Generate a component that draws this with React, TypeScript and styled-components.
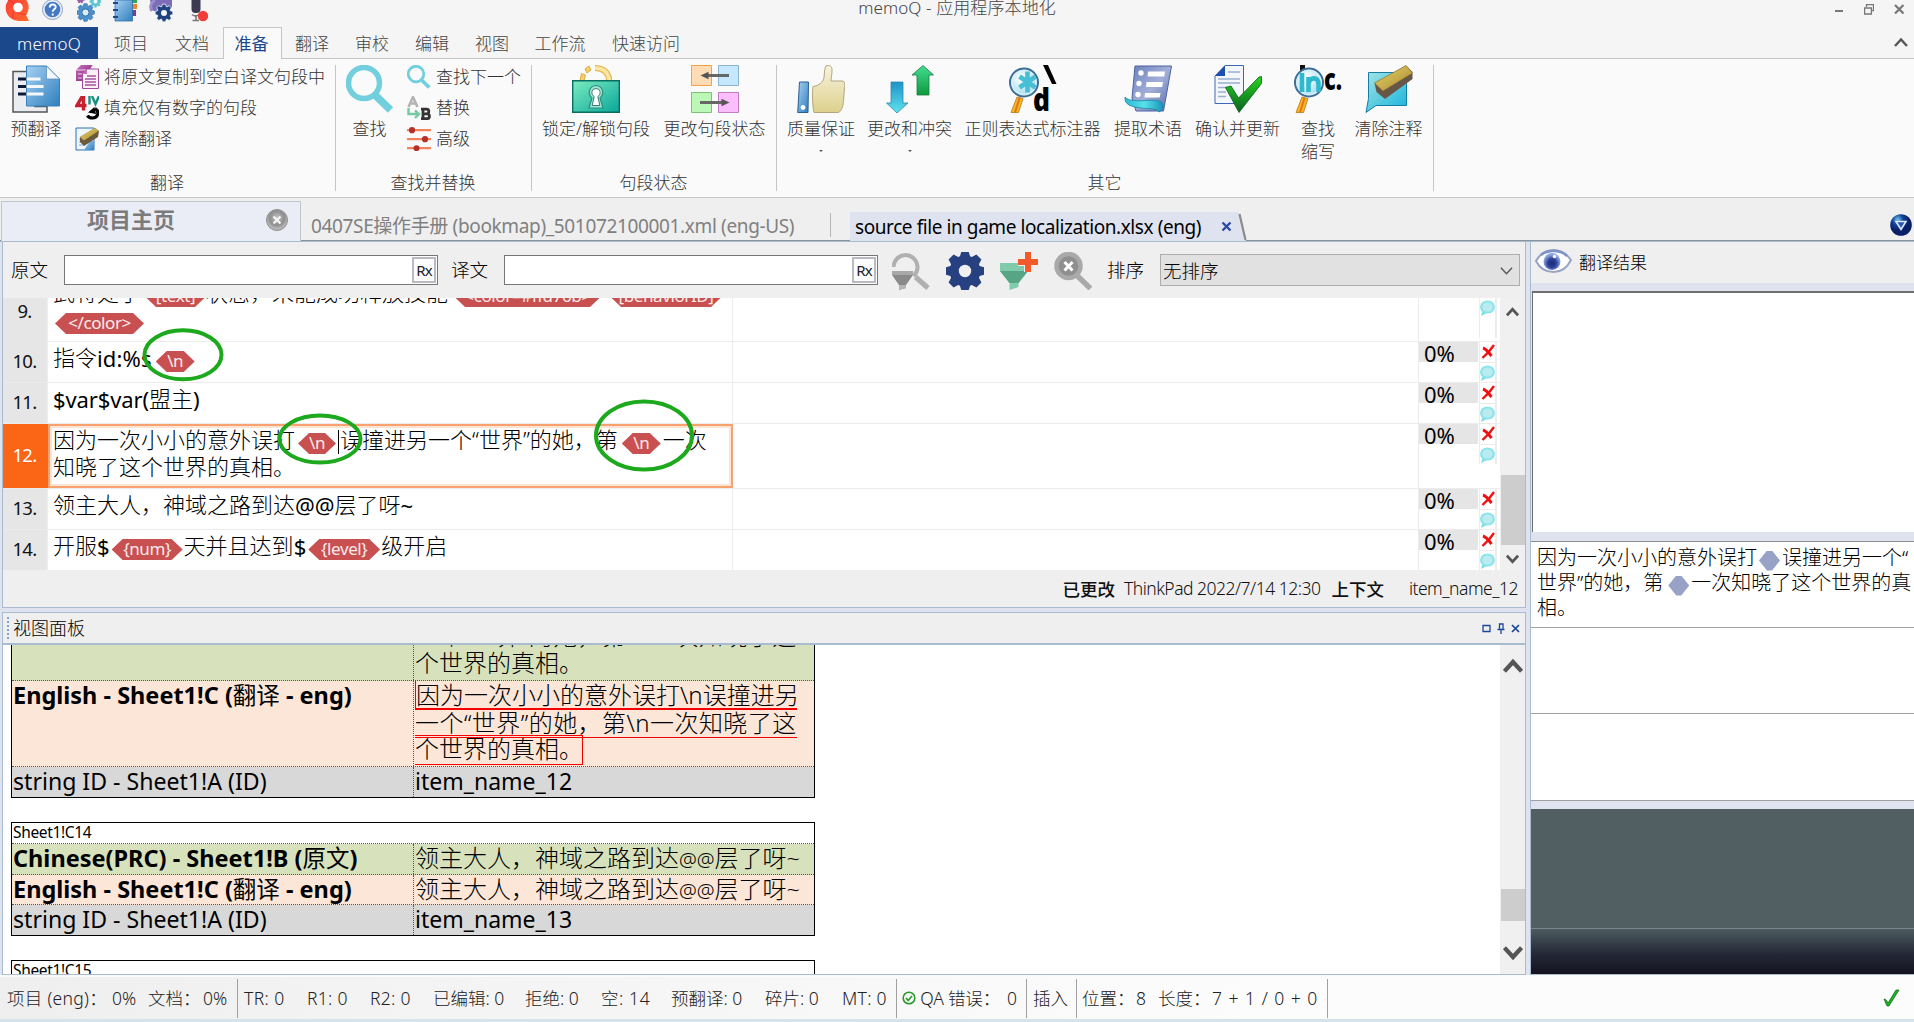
import React from "react";
import styled, { createGlobalStyle } from "styled-components";

const ui = `"Noto Sans", "Noto Sans CJK SC", sans-serif`;
const lav = "#dfe3f0";
const edge = "#a9bccf";

const Global = createGlobalStyle`
  * { box-sizing: border-box; }
  body { margin: 0; overflow: hidden; background: #efefef; font-family: ${ui}; color: #000; }
  svg { display: block; flex: none; }
`;

const Window = styled.div`
  width: 1914px; height: 1022px; display: flex; flex-direction: column; overflow: hidden;
`;
const Txt = styled.span<{ size?: number; ls?: number; w?: number; color?: string }>`
  white-space: pre;
  font-size: ${(p) => p.size ?? 17}px;
  letter-spacing: ${(p) => p.ls ?? 0}px;
  font-weight: ${(p) => p.w ?? 300};
  color: ${(p) => p.color ?? "inherit"};
`;

/* ---------- title bar ---------- */
const TitleBar = styled.header`
  height: 27px; flex: none; background: #f5f5f5; display: grid; grid-template-columns: 1fr auto 1fr; align-items: start;
`;
const Quick = styled.div`display: flex; gap: 12px; padding-left: 5px;`;
const WinTitle = styled.div`font-size: 17px; font-weight: 300; line-height: 16px; color: #444; white-space: pre; letter-spacing: 0.1px;`;
const WinButtons = styled.div`display: flex; justify-content: flex-end; gap: 20px; padding: 4px 9px 0 0;`;

/* ---------- ribbon tabs ---------- */
const TabStrip = styled.nav`
  height: 32px; flex: none; display: flex; background: #f5f5f5; box-shadow: inset 0 -1px #c6c6c6;
  font-size: 17px; font-weight: 300; line-height: 33px; color: #444; text-align: center;
`;
const RibbonTab = styled.div<{ w: number; active?: boolean }>`
  width: ${(p) => p.w}px;
  ${(p) => p.active && "background:#fafafa;color:#1b478b;border:1px solid #c6c6c6;border-bottom:0;line-height:32px;font-weight:400;padding-right:2px;"}
`;
const FileTab = styled.div`width: 98px; margin-right: 3px; background: #1b478b; color: #fff; font-weight: 300; letter-spacing: 0.2px;`;
const Collapse = styled.div`margin-left: auto; padding: 9px 6px 0 0;`;

/* ---------- ribbon ---------- */
const Ribbon = styled.section`
  height: 139px; flex: none; display: flex; background: #fafafa; border-bottom: 1px solid #c6c6c6; padding-top: 6px;
  color: #333; font-size: 17px; font-weight: 300;
`;
const Group = styled.div<{ w: number }>`
  width: ${(p) => p.w}px; height: 126px; border-right: 1px solid #c6c6c6; display: flex; flex-direction: column;
`;
const GroupBody = styled.div`flex: 1; display: flex;`;
const GroupLabel = styled.div`text-align: center; line-height: 18px; height: 17px; padding-right: 1px;`;
const Large = styled.div<{ w: number }>`
  width: ${(p) => p.w}px; display: flex; flex-direction: column; align-items: center; text-align: center;
  line-height: 23px; white-space: pre;
`;
const LargeLabel = styled.div`margin-top: 4px;`;
const Caret = styled.i`
  margin-top: 10px; border: 2.5px solid transparent; border-top-color: #555; border-bottom: 0;
`;
const Smalls = styled.div<{ ml: number }>`margin-left: ${(p) => p.ml}px; display: flex; flex-direction: column; gap: 7px;`;
const Small = styled.div`display: flex; gap: 5px; align-items: center; height: 24px; white-space: pre; line-height: 26px;`;

/* ---------- document tabs ---------- */
const DocTabs = styled.nav`
  height: 44px; flex: none; display: flex; align-items: flex-end; background: #efefef;
  box-shadow: inset 0 -1px ${edge}, inset 0 -2px #8b9299;
`;
const HomeTab = styled.div`
  width: 300px; height: 40px; margin: 0 0 1px 1px; background: #ebedf6; border: 1px solid #c2c5cb; border-bottom: 0;
  display: flex; align-items: center; padding: 0 12px 3px 85px; justify-content: space-between;
`;
const HomeName = styled.span`font-size: 22px; font-weight: 700; color: #7b7b7b; line-height: 26px; margin-top: -3px;`;
const DocTab = styled.div`width: 529px; padding-left: 10px; height: 29px; line-height: 27px;`;
const TabSep = styled.div`width: 1px; height: 24px; background: #b5b5b5; margin: 0 19px 5px 0;`;
const ActiveDoc = styled.div`
  height: 29px; width: 388px; display: flex; align-items: center; background: ${lav}; padding: 0 6px 0 5px;
  justify-content: space-between; margin-bottom: 1px;
`;
const DocMenu = styled.div`margin: 0 2px 6px auto;`;

/* ---------- workspace ---------- */
const Work = styled.main`flex: none; height: 735px; display: flex; background: ${lav}; border-bottom: 2px solid #fafbfc;`;
const Left = styled.div`width: 1526px; padding-left: 2px; display: flex; flex-direction: column; gap: 4px;`;
const Editor = styled.section`
  height: 366px; background: #efefef; border: solid ${edge}; border-width: 0 1px 1px 1px; display: flex; flex-direction: column;
`;
const Filter = styled.div`height: 56px; display: flex; align-items: center; padding-left: 8px; font-size: 18.5px; font-weight: 300;`;
const FLabel = styled.label<{ w: number }>`width: ${(p) => p.w}px; white-space: pre; line-height: 28px;`;
const Field = styled.div<{ mr: number }>`
  width: 374px; height: 30px; border: 1px solid #767676; background: #fff; display: flex; justify-content: flex-end;
  padding: 1px; margin-right: ${(p) => p.mr}px;
`;
const Rx = styled.button`
  width: 24px; height: 26px; padding: 0; border: 2px solid #b9bac4; background: #fcfcfd; font: 400 15px/22px ${ui};
  letter-spacing: -0.8px; color: #222;
`;
const Tools = styled.div`display: flex; gap: 16px; margin-right: 15px; padding-top: 1px;`;
const Select = styled.div`
  width: 360px; height: 32px; border: 1px solid #adadad; background: #e1e1e1; display: flex; align-items: center;
  justify-content: space-between; padding: 0 6px 0 2px;
`;

const GridArea = styled.div`height: 272px; display: flex; overflow: hidden; position: relative;`;
const Rows = styled.div`width: 1497px; background: #fff;`;
const Row = styled.div<{ h: number }>`
  height: ${(p) => p.h}px; display: grid; grid-template-columns: 45px 685px 686px 60px 21px; border-bottom: 1px solid #ececec;
`;
const Num = styled.div<{ active?: boolean; up?: boolean }>`
  background: ${(p) => (p.active ? "#fb6516" : "#e6e6e6")}; color: ${(p) => (p.active ? "#fff" : "#111")};
  border-right: 1px solid ${(p) => (p.active ? "#fb6516" : "#eee")};
  display: flex; align-items: center; justify-content: center;
  padding: 0 1px ${(p) => (p.up ? 24 : 3)}px 0; font-size: 18.5px; font-weight: 400; letter-spacing: -0.7px;
`;
const Source = styled.div<{ active?: boolean; pull?: number }>`
  overflow: hidden; padding: 2px 0 0 5px; border-right: 1px solid #ececec; font-size: 22px; font-weight: 300;
  ${(p) => p.active && "border:2px solid #f9a16f;box-shadow:inset 0 0 0 2px #fde3d3;padding:0 0 0 3px;"}
  & > :first-child { margin-top: ${(p) => p.pull ?? 0}px; }
`;
const Line = styled.div`display: flex; height: 27px; align-items: center; white-space: pre; line-height: 27px;`;
const Pill = styled.span<{ w: number; l?: number; r?: number }>`
  width: ${(p) => p.w}px; height: 21px; margin: 8px ${(p) => p.r ?? 0}px 0 ${(p) => p.l ?? 0}px; flex: none;
  background: #c85050; color: #fbeaea; font-size: 17px; font-weight: 400; line-height: 20px; text-align: center; letter-spacing: -0.4px;
  clip-path: polygon(0 50%, 11px 0, calc(100% - 11px) 0, 100% 50%, calc(100% - 11px) 100%, 11px 100%);
`;
const CaretBar = styled.i`width: 1px; height: 24px; background: #000; margin: 4px 1px 0 2px;`;
const Latin = styled.span<{ ls?: number }>`font-weight: 400; letter-spacing: ${(p) => p.ls ?? 0}px; padding-top: 2px;`;
const Target = styled.div`border-right: 1px solid #ececec;`;
const Match = styled.div<{ empty?: boolean }>`
  height: 20px; overflow: hidden; background: ${(p) => (p.empty ? "#fff" : "#e5e5e5")}; padding-left: 5px; line-height: 23px;
  font-size: 22px; font-weight: 400; width: 59px;
`;
const Marks = styled.div`
  width: 18px; display: flex; flex-direction: column; align-items: center; border: solid #ececec; border-width: 0 2px 0 1px;
  height: 40px;
`;
const MarkX = styled.div`width: 100%; height: 21px; border-bottom: 1px solid #ececec; display: flex; justify-content: center; padding-top: 2px;`;
const MarkBubble = styled.div`padding-top: 2px;`;
const Annotations = styled.svg`position: absolute; left: 0; top: 0; pointer-events: none;`;

const Scroll = styled.div<{ w: number }>`
  width: ${(p) => p.w}px; background: #f0f0f0; display: flex; flex-direction: column; align-items: center; flex: none;
`;
const Thumb = styled.i<{ mt: number; h: number }>`width: 24px; height: ${(p) => p.h}px; margin-top: ${(p) => p.mt}px; background: #cdcdcd;`;
const ArrowBox = styled.div<{ mt: number }>`margin-top: ${(p) => p.mt}px; height: 16px;`;
const Info = styled.div`
  flex: 1; display: flex; align-items: center; justify-content: flex-end; padding: 0 7px 1px 0; color: #111;
`;
const InfoItem = styled.span<{ mr?: number; bold?: boolean; ls?: number }>`
  font-size: 17.5px; white-space: pre; margin-right: ${(p) => p.mr ?? 0}px; font-weight: ${(p) => (p.bold ? 500 : 300)};
  letter-spacing: ${(p) => p.ls ?? 0}px;
`;

/* ---------- view pane ---------- */
const View = styled.section`height: 363px; border: 1px solid ${edge}; background: #fff; display: flex; flex-direction: column;`;
const ViewHead = styled.div`
  height: 32px; flex: none; background: #efefef; border-bottom: 2px solid ${edge}; display: flex; align-items: center; padding: 0 5px 0 4px;
`;
const Grip = styled.i`width: 2px; height: 22px; margin-right: 4px; background: repeating-linear-gradient(#7fa3d4 0 2px, transparent 2px 4px);`;
const PaneName = styled.span`font-size: 18px; font-weight: 300; margin-top: -3px;`;
const PaneButtons = styled.div`margin-left: auto; display: flex; gap: 6px; align-items: center;`;
const ViewBody = styled.div`flex: 1; min-height: 0; display: flex; justify-content: space-between;`;
const Sheets = styled.div`width: 804px; margin-left: 8px; overflow: hidden; display: flex; flex-direction: column; gap: 24px;`;
const Sheet = styled.div<{ cut?: boolean }>`border: 1px solid #000; flex: none; ${(p) => p.cut && "border-top:0;"}`;
const SheetTitle = styled.div`height: 21px; line-height: 19px; border-bottom: 1px dotted #555; padding-left: 1px; font-size: 15.5px; letter-spacing: -0.35px;`;
const tones = { green: "#d7e2bc", peach: "#fce6d7", grey: "#d8d8d8" };
const SheetRow = styled.div<{ tone: keyof typeof tones; h: number }>`
  height: ${(p) => p.h}px; display: grid; grid-template-columns: 401px 1fr; background: ${(p) => tones[p.tone]};
  border-bottom: ${(p) => (p.tone === "grey" ? 0 : 1)}px dotted #555; overflow: hidden; line-height: 28px;
`;
const Name = styled.div<{ bold?: boolean }>`
  padding-left: 1px; white-space: pre; font-size: ${(p) => (p.bold ? 23.5 : 23.1)}px; font-weight: ${(p) => (p.bold ? 700 : 400)};
`;
const Thin = styled.span`font-weight: 400; font-size: 23.5px;`;
const At = styled.span`font-size: 20px;`;
const Value = styled.div<{ pull?: number; latin?: boolean }>`
  border-left: 1px dotted #555; padding-left: 1px; white-space: pre; font-size: 24px; font-weight: 300;
  ${(p) => p.latin && "font-size:23px;font-weight:400;"}
  & > :first-child { margin-top: ${(p) => p.pull ?? 0}px; }
`;
const VLine = styled.div<{ ls?: number }>`height: 27px; line-height: 27px; letter-spacing: ${(p) => p.ls ?? 0}px;`;
const Hit = styled.div<{ w: number; kind: "open" | "mid" | "close" }>`
  width: ${(p) => p.w}px; border: 0 solid #f50000;
  ${(p) => p.kind === "open" && "height:29px;line-height:27px;border-width:0 0 2px 1px;"}
  ${(p) => p.kind === "mid" && "height:28px;line-height:25px;border-width:0 0 1px 0;letter-spacing:0.45px;"}
  ${(p) => p.kind === "close" && "height:30px;line-height:26px;border-width:1px 1px 1px 0;margin-top:-3px;"}
`;

/* ---------- results pane ---------- */
const Results = styled.aside`margin-left: 4px; flex: 1; display: flex; flex-direction: column; border-left: 1px solid ${edge};`;
const ResHead = styled.div`
  height: 41px; background: #efefef; display: flex; align-items: center; gap: 7px; padding: 0 0 3px 4px; font-size: 17px; font-weight: 300;
`;
const ResList = styled.div`height: 241px; margin: 8px 0 0 1px; background: #fff; border: solid #6e6e6e; border-width: 2px 0 0 1px;`;
const Segment = styled.div<{ h: number; mt?: number }>`
  height: ${(p) => p.h}px; margin-top: ${(p) => p.mt ?? 0}px; background: #fff; border-bottom: 1px solid #a0a0a0;
  border-top: ${(p) => (p.mt ? 1 : 0)}px solid #8c8c8c; padding: 3px 0 0 6px; font-size: 20px; font-weight: 300; overflow: hidden;
`;
const SLine = styled.div`display: flex; height: 25px; align-items: center; white-space: pre; line-height: 25px;`;
const Hex = styled.i<{ l?: number }>`
  width: 21px; height: 20px; margin: 6px 2px 0 ${(p) => p.l ?? 2}px; background: #98a1c6; flex: none;
  clip-path: polygon(0 50%, 8px 0, 13px 0, 100% 50%, 13px 100%, 8px 100%);
`;
const Dark = styled.div`margin-top: 8px; height: 120px; background: #515f63; border-bottom: 1px solid #7b8589;`;
const DarkFade = styled.div`flex: 1; background: linear-gradient(#4c5b5f, #242937 55%, #141220); border-bottom: 1px solid ${edge};`;

/* ---------- status bar ---------- */
const Status = styled.footer`
  height: 45px; flex: none; display: flex; align-items: center; background: linear-gradient(90deg, #efefef, #fcfcfc 65%);
  border-bottom: 3px solid #d5e4ea; font-size: 17.5px; font-weight: 300; color: #222; padding-left: 7px;
`;
const Stat = styled.span<{ w: number; ls?: number }>`
  width: ${(p) => p.w}px; white-space: pre; letter-spacing: ${(p) => p.ls ?? 0}px; flex: none; padding-bottom: 1px;
`;
const StatSep = styled.i<{ mr: number }>`width: 1px; height: 39px; background: #a0a0a0; margin-right: ${(p) => p.mr}px;`;
const StatOk = styled.div`margin: 0 14px 0 auto;`;

/* ---------- icons ---------- */
function gear(cx: number, cy: number, ro: number, ri: number, n: number) {
  let d = "";
  for (let i = 0; i < n; i++) {
    const a = (i * 2 * Math.PI) / n - Math.PI / 2;
    const s = Math.PI / n;
    [[-0.85, ri], [-0.45, ro], [0.45, ro], [0.85, ri]].forEach(([k, r]) => {
      d += `${d ? "L" : "M"}${(cx + r * Math.cos(a + k * s)).toFixed(2)} ${(cy + r * Math.sin(a + k * s)).toFixed(2)}`;
    });
  }
  return d + "Z";
}
const Ico = ({ s = 24, h, vb, children }: { s?: number; h?: number; vb?: string; children: React.ReactNode }) => (
  <svg width={s} height={h ?? s} viewBox={vb ?? `0 0 ${s} ${h ?? s}`} fill="none">{children}</svg>
);
const DefsSvg = styled.svg`position: absolute;`;
const Defs = () => (
  <DefsSvg width="0" height="0">
    <defs>
      <linearGradient id="blue" x1="0" y1="0" x2="1" y2="1"><stop stopColor="#a5d0f3" /><stop offset="1" stopColor="#2f7fbd" /></linearGradient>
      <linearGradient id="teal" x1="0" y1="0" x2="1" y2="1"><stop stopColor="#7cecc0" /><stop offset="1" stopColor="#0aa69a" /></linearGradient>
      <linearGradient id="skin" x1="0" y1="0" x2="0" y2="1"><stop stopColor="#f7f3de" /><stop offset="1" stopColor="#ddd08c" /></linearGradient>
      <linearGradient id="down" x1="0" y1="0" x2="0" y2="1"><stop stopColor="#1d93c9" /><stop offset="1" stopColor="#5fe3ef" /></linearGradient>
      <linearGradient id="up" x1="0" y1="0" x2="0" y2="1"><stop stopColor="#42dd92" /><stop offset="1" stopColor="#0e9a3c" /></linearGradient>
      <linearGradient id="scroll" x1="0" y1="0" x2="1" y2="1"><stop stopColor="#6c82bd" /><stop offset=".5" stopColor="#a3afd8" /><stop offset="1" stopColor="#5468a8" /></linearGradient>
      <linearGradient id="curl" x1="0" y1="0" x2="1" y2="0"><stop stopColor="#2bb9d3" /><stop offset=".5" stopColor="#58e2ea" /><stop offset="1" stopColor="#1b93b8" /></linearGradient>
      <linearGradient id="tick" x1="0" y1="0" x2="0" y2="1"><stop stopColor="#25d51c" /><stop offset="1" stopColor="#0b5f23" /></linearGradient>
      <linearGradient id="note" x1="0" y1="0" x2="1" y2="1"><stop stopColor="#a3e4e6" /><stop offset="1" stopColor="#14b3dc" /></linearGradient>
      <linearGradient id="gold" x1="0" y1="0" x2="1" y2="1"><stop stopColor="#e8d56f" /><stop offset="1" stopColor="#a8872b" /></linearGradient>
      <linearGradient id="purple" x1="0" y1="0" x2="1" y2="1"><stop stopColor="#c96bb9" /><stop offset="1" stopColor="#7c2175" /></linearGradient>
      <linearGradient id="fire" x1="0" y1="0" x2="1" y2="1"><stop stopColor="#ff3b3b" /><stop offset="1" stopColor="#ff6a2a" /></linearGradient>
      <radialGradient id="lens" cx=".4" cy=".35"><stop stopColor="#fff" /><stop offset="1" stopColor="#b9e4f4" /></radialGradient>
      <radialGradient id="iris" cx=".5" cy=".6"><stop stopColor="#1d2a78" /><stop offset=".5" stopColor="#2b3f96" /><stop offset="1" stopColor="#8fa6e4" /></radialGradient>
      <radialGradient id="orb" cx=".35" cy=".25"><stop stopColor="#6fc6ee" /><stop offset=".5" stopColor="#12439a" /><stop offset="1" stopColor="#0a1f66" /></radialGradient>
      <radialGradient id="greyOrb" cx=".5" cy=".4"><stop stopColor="#c5c5c5" /><stop offset=".7" stopColor="#8d8d8d" /><stop offset="1" stopColor="#b5b5b5" /></radialGradient>
    </defs>
  </DefsSvg>
);
const Magnifier = ({ s }: { s: number }) => (
  <Ico s={s} vb="0 0 48 48"><circle cx="18" cy="18" r="15.5" stroke="#72cfdd" strokeWidth="5.5" /><path d="M28 29 44.5 45" stroke="#72cfdd" strokeWidth="7.5" /></Ico>
);
const PreTranslate = () => (
  <Ico s={48}>
    <path d="M1 6.500h22v35h12v5.500H1z" fill="#e9edf2" stroke="#555" strokeWidth="1.500" />
    <path d="M14.500 1h20l13 13v27h-33z" fill="url(#blue)" stroke="#3c7fb8" />
    <path d="M34.500 1v13h13z" fill="#f4f8fc" stroke="#5d93c0" strokeWidth=".8" />
    <path d="M6 14h8.500M6 21.500h8.500M6 29h8.500" stroke="#0b1a3a" strokeWidth="3" />
    <path d="M14.500 14h14M14.500 21.500h17M14.500 29h17" stroke="#f2f8fd" strokeWidth="3.200" />
  </Ico>
);
const CopySource = () => (
  <Ico>
    <path d="M1 5 6 0h12l-2 4v12H1z" fill="url(#purple)" /><path d="M1 5h14l3-5M3 9h8M3 13h5" stroke="#f3dcef" />
    <path d="M12 4h11.500v19.500h-16V9z" fill="#faf1f8" stroke="#a0489a" />
    <path d="M12 4v5H7.500z" fill="#c06cb6" /><path d="M12 11h9M10 14h11M10 17h11M10 20h11" stroke="#a652a0" strokeWidth="1.300" />
  </Ico>
);
const FillNumbers = () => (
  <Ico>
    <path d="M7.500 0 2 9.500h9.500M8.500 0v14.500" stroke="#c8202f" strokeWidth="3.400" />
    <path d="M14.500 0v8.500M17 0l3.500 8L24 0" stroke="#17917f" strokeWidth="2.400" />
    <path d="M20 12.500c5 3 3 9.500-2.500 9.500-2.500 0-4-.5-5-2.500" stroke="#000" strokeWidth="3.200" /><path d="M13 16.500 21 18l-1.500-7z" fill="#000" />
  </Ico>
);
const Eraser = () => (
  <g>
    <path d="M5 10 20 1l4 3-1 6L9 19l-4-4z" fill="#6b5a3c" /><path d="M5 10 20 1l3.500 3L9 13.500z" fill="url(#gold)" />
  </g>
);
const ClearTr = () => (
  <Ico>
    <path d="M1 1h18v22H1z" fill="#eef6fd" stroke="#2e70b5" /><path d="M15 14h4v9H9z" fill="url(#blue)" />
    <path d="M4 12h5M4 15h6M4 18h6" stroke="#7fa8d5" /><Eraser />
  </Ico>
);
const Replace = () => (
  <Ico>
    <path d="M1.500 11 6 1l4.500 10M3 7.500h6" stroke="#b3b5b3" strokeWidth="2.600" />
    <path d="M1.500 12v6h9M8 14.500l4 3.500-4 4" stroke="#78c8a0" strokeWidth="2.400" />
    <path d="M16 13.200v9.500M14 13.200h5.500a2.200 2.200 0 0 1 0 4.600H16h4a2.400 2.400 0 0 1 0 4.900h-6" stroke="#333" strokeWidth="2.800" />
  </Ico>
);
const Advanced = () => (
  <Ico>
    <path d="M0 3.200h24M0 12.200h24M0 21.200h24" stroke="#f4835c" strokeWidth="2.300" />
    <circle cx="5" cy="3.200" r="3.100" fill="#b5302a" /><circle cx="18" cy="12.200" r="3.100" fill="#b5302a" /><circle cx="9.500" cy="21.200" r="3" fill="#b5302a" />
  </Ico>
);
const Lock = () => (
  <Ico s={48}>
    <path d="M23 3c9 0 13.500 5 14.500 13" stroke="#e3bb55" strokeWidth="6" /><path d="M23 3c9 0 13.500 5 14.500 13" stroke="#fbe7a4" strokeWidth="3.600" />
    <path d="m8 15.500 1.500-7 4 1.500-1.500 5.500z" fill="#f4cf6a" stroke="#d9ae45" /><path d="m13 4 4-3 2 4-4 3z" fill="#f4cf6a" stroke="#d9ae45" />
    <path d="M.7 15.700h46.600v31.600H.7z" fill="url(#teal)" stroke="#0b6d62" strokeWidth="1.400" />
    <path d="M24 20.500a7 7 0 0 1 4 12.500l3 10H17l3-10a7 7 0 0 1 4-12.500z" fill="#9fe8d2" stroke="#2a8f7e" strokeWidth="1.200" />
    <path d="M24 23.500a4.200 4.200 0 0 1 1.800 8l2 9h-7.600l2-9a4.200 4.200 0 0 1 1.800-8z" fill="#fff" stroke="#2a6d6a" strokeWidth=".9" />
  </Ico>
);
const ChangeState = () => (
  <Ico s={48}>
    <path d="M.5.5h20v20H.5z" fill="#ffdcb4" stroke="#f4a14a" /><path d="M27.500.5h20v20h-20z" fill="#c6e8ff" stroke="#8bb3cc" />
    <path d="M.5 27.500h20v20H.5z" fill="#bdf7b8" stroke="#7ec07a" /><path d="M27.500 27.500h20v20h-20z" fill="#fbbdfb" stroke="#c17cc4" />
    <path d="M38 10.500H15M9 37.500h23" stroke="#666" strokeWidth="2.800" /><path d="m9.500 10.500 8-3.800v7.600zM38.500 37.500l-8-3.800v7.600z" fill="#555" />
  </Ico>
);
const Thumbs = () => (
  <Ico s={48}>
    <path d="M2.500 17h9L11 47.500H.7z" fill="url(#blue)" stroke="#2c5f94" /><circle cx="6" cy="42.500" r="2.400" fill="#fff" />
    <path d="M29 1c3-1.500 6 0 6 4 0 5-1 8-1 11h12c2 1 2 4 1.500 6.500l-1 14c-.5 5-2 9.500-5 11H17c-1.500-5-2-20-1-26 6-1 10-4 11-9 .5-5 .5-9 2-11.500z" fill="url(#skin)" stroke="#b1a67c" />
  </Ico>
);
const Conflict = () => (
  <Ico s={48}>
    <path d="M5 17h12v21h5L11 48 .5 38H5z" fill="url(#down)" stroke="#2e89a8" strokeWidth=".8" />
    <path d="M37 .5 47.500 10H43v20H31V10h-5z" fill="url(#up)" stroke="#1c7a45" strokeWidth=".8" />
  </Ico>
);
const Loupe = () => (
  <>
    <path d="m8 32 6 1.500L9.500 47.500H2z" fill="#f5b91e" stroke="#b8751a" strokeWidth=".8" /><path d="M10.500 33 6 47.500" stroke="#e4731c" strokeWidth="2" />
    <circle cx="15" cy="17.500" r="14" fill="url(#lens)" stroke="#3c6d96" strokeWidth="2" /><circle cx="15" cy="17.500" r="12" stroke="#d6eef8" strokeWidth="1.500" />
  </>
);
const Glyph = styled.text`font-family: "Open Sans", sans-serif; font-weight: 800;`;
const Regex = () => (
  <Ico s={48}><Loupe />
    <path d="M18.500 6.500v21M10.500 11.500l16 11M26.500 11.500l-16 11" stroke="#46bfd4" strokeWidth="4.600" />
    <path d="M34 0h5l8.500 19H43z" fill="#000" />
    <Glyph x="24" y="46" fontSize="31" fill="#000" textLength="17" lengthAdjust="spacingAndGlyphs">d</Glyph>
  </Ico>
);
const Acronym = () => (
  <Ico s={48}>
    <path d="M6 0h5v8H6z" fill="#111" /><Loupe />
    <path d="M8 8v19M14.500 27V12M14.500 19c1-7 10-8 10 0v8" stroke="#2fb9cc" strokeWidth="4.600" />
    <Glyph x="30" y="25" fontSize="30" fill="#000" textLength="18" lengthAdjust="spacingAndGlyphs">c.</Glyph>
  </Ico>
);
const Extract = () => (
  <Ico s={48}>
    <path d="M11 1h36.500l-8 45H12L8 33z" fill="url(#scroll)" stroke="#4d62a0" />
    <path d="M1 32c3 4 12 4 20 3.500 9-.5 17-.5 18 4 .6 4-2 7-4 7.500-2-4-11-3-18-4-9-1-17-3-16-11z" fill="url(#curl)" stroke="#1a87a4" strokeWidth=".8" />
    <circle cx="17" cy="8" r="2.700" fill="#fff" /><circle cx="15" cy="18.500" r="2.700" fill="#fff" /><circle cx="14" cy="29.500" r="2.700" fill="#fff" />
    <path d="M24 6.500h17l-.8 5H23.500zM22.500 17h16.500l-.8 5H22zM21 28h15.500l-.8 4.500H20.500z" fill="#fff" />
  </Ico>
);
const Confirm = () => (
  <Ico s={48}>
    <path d="M11 .5h18.500v38H1V11z" fill="#f3f7fc" stroke="#3f68b4" /><path d="M11 .5V11H1z" fill="#1d4fae" />
    <path d="M14 7h12M4 14h22M4 18h22M4 22.500h10M4 27h8M4 31.500h8" stroke="#9db0cf" strokeWidth="1.500" />
    <path d="M11.500 22.500 17 21l7.500 12L45 12l2.500-.5v7L25 47.500z" fill="url(#tick)" stroke="#0b5a1c" strokeWidth=".8" />
  </Ico>
);
const ClearNote = () => (
  <Ico s={48}>
    <path d="M3.500 7.500h38v33H11L1 47.500l2.500-14z" fill="url(#note)" stroke="#157ca4" />
    <path d="M9.500 18 41 .5 47.500 7v7L20 34l-8.500-7z" fill="#675548" /><path d="M9.500 18 41 .5l6.500 7.500L18 26z" fill="url(#gold)" stroke="#8c742f" strokeWidth=".6" />
  </Ico>
);
const Bubble = () => (
  <Ico s={15} h={16}>
    <path d="M1 16 3 9.500l4 3.500z" fill="#7fdce6" /><ellipse cx="7.500" cy="7" rx="7.500" ry="6.600" fill="#8ce4ec" /><ellipse cx="7.500" cy="7" rx="5.200" ry="4.600" fill="#bcebef" />
  </Ico>
);
const RedX = () => (
  <Ico s={14} h={15}><path d="M2 4c3.500 1 5.500 4 8.500 8" stroke="#f01010" strokeWidth="3" /><path d="M13 1 8 7.500 1.500 14" stroke="#f01010" strokeWidth="2.400" /></Ico>
);
const Chev = ({ up, s = 13, sw = 2.4 }: { up?: boolean; s?: number; sw?: number }) => (
  <Ico s={s} vb="0 0 14 14"><path d={up ? "M1 10 7 3.500 13 10" : "M1 4l6 6.500L13 4"} stroke="#555" strokeWidth={sw} /></Ico>
);

function QuickIcons() {
  return (
    <Quick>
      <Ico h={22}>
        <path d="M12.500-5a13 12.500 0 0 1 8.500 20l3 6h-9A12.500 12.500 0 1 1 12.500-5z" fill="url(#fire)" />
        <path d="M3 0c4 1 6 4 6 8M22 14c-4 1-7 0-10-2M8 18c-1-3 0-6 2-9" stroke="#d92f2f" strokeWidth="1.200" opacity=".6" /><circle cx="13" cy="7.500" r="4.800" fill="#fff" />
      </Ico>
      <Ico h={22}>
        <circle cx="11.500" cy="9.500" r="10" fill="#e8eef6" stroke="#8da2c4" /><circle cx="11.500" cy="9.500" r="7.800" fill="#4478c6" />
        <path d="M8.700 7.500c0-4 6-4 6-.5 0 2.300-3 2.200-3 4.700M11.700 13.500v2" stroke="#fff" strokeWidth="1.900" />
      </Ico>
      <Ico h={22}>
        <path d={gear(8.5, 12.5, 9, 7, 8)} fill="#4b8fcb" stroke="#2f6ba5" strokeWidth=".6" /><circle cx="8.500" cy="12.500" r="3.600" fill="#dcebf8" stroke="#2f6ba5" />
        <path d={gear(3.5, -1, 4.5, 3.2, 7)} fill="#9a5aa8" /><path d={gear(18.5, 1.5, 6, 4.4, 8)} fill="#5ec4cf" /><circle cx="18.500" cy="1.500" r="2" fill="#e8f8fa" />
      </Ico>
      <Ico h={22}>
        <path d="M18 0h6v3h-6z" fill="#2aa84c" /><path d="M18 4h6v5h-6z" fill="#f0832c" /><path d="M18 10h5v6h-5z" fill="#7d3b98" />
        <path d="M2 0h17.500v21H2z" fill="url(#blue)" stroke="#2e6fae" strokeWidth=".8" />
        <path d="M0 3h5M0 10h5M0 17h5" stroke="#1d4a86" strokeWidth="2" />
      </Ico>
      <Ico h={22}>
        <path d="M1 0h22v7l-5 3-11 2-6-3 1-5z" fill="#7d6db8" /><path d="M3 11c-2-3-2-8 3-11" stroke="#9a8dcc" strokeWidth="3" />
        <path d={gear(15, 13, 9, 6.8, 8)} fill="#1e4380" stroke="#f5f5f5" strokeWidth=".8" /><circle cx="15" cy="13" r="3" fill="#f5f5f5" />
      </Ico>
      <Ico h={22}>
        <path d="M6.500 0h9v9a4 4 0 0 1-4 4h-1a4 4 0 0 1-4-4z" fill="#3b3a50" /><path d="M7 14.500c2 1.600 5 1.600 7 0M11 16v4M7.500 20.500H14" stroke="#777" strokeWidth="1.600" />
        <circle cx="18" cy="16" r="5.200" fill="#ef3e3a" />
      </Ico>
    </Quick>
  );
}

type SegProps = { n: string; h: number; active?: boolean; pull?: number; first?: boolean; children: React.ReactNode };
const Seg = ({ n, h, active, pull, first, children }: SegProps) => (
  <Row h={h}>
    <Num active={active} up={first}>{n}</Num>
    <Source active={active} pull={pull}>{children}</Source>
    <Target />
    <Match empty={first}>{first ? "" : "0%"}</Match>
    <Marks>
      {!first && <MarkX><RedX /></MarkX>}
      <MarkBubble><Bubble /></MarkBubble>
    </Marks>
  </Row>
);
const Big = ({ w, icon, label, caret }: { w: number; icon: React.ReactNode; label: string; caret?: boolean }) => (
  <Large w={w}>{icon}<LargeLabel>{label}</LargeLabel>{caret && <Caret />}</Large>
);

export default function App() {
  return (
    <Window>
      <Global />
      <Defs />
      <TitleBar>
        <QuickIcons />
        <WinTitle>memoQ - 应用程序本地化</WinTitle>
        <WinButtons>
          <Ico s={10} h={11}><path d="M1 7h8" stroke="#777" strokeWidth="2" /></Ico>
          <Ico s={10} h={11}><path d="M2.500 3V.7h7v6H7.500M.6 4h6.800v6H.6z" stroke="#777" strokeWidth="1.300" /></Ico>
          <Ico s={11} h={11}><path d="m1 1 8.500 8.500M9.500 1 1 9.500" stroke="#777" strokeWidth="2.200" /></Ico>
        </WinButtons>
      </TitleBar>
      <TabStrip>
        <FileTab>memoQ</FileTab>
        <RibbonTab w={60}>项目</RibbonTab>
        <RibbonTab w={62}>文档</RibbonTab>
        <RibbonTab w={59} active>准备</RibbonTab>
        <RibbonTab w={60}>翻译</RibbonTab>
        <RibbonTab w={60}>审校</RibbonTab>
        <RibbonTab w={60}>编辑</RibbonTab>
        <RibbonTab w={60}>视图</RibbonTab>
        <RibbonTab w={76}>工作流</RibbonTab>
        <RibbonTab w={96}>快速访问</RibbonTab>
        <Collapse><Chev up s={14} /></Collapse>
      </TabStrip>
      <Ribbon>
        <Group w={336}>
          <GroupBody>
            <Big w={72} icon={<PreTranslate />} label="预翻译" />
            <Smalls ml={3}>
              <Small><CopySource />将原文复制到空白译文句段中</Small>
              <Small><FillNumbers />填充仅有数字的句段</Small>
              <Small><ClearTr />清除翻译</Small>
            </Smalls>
          </GroupBody>
          <GroupLabel>翻译</GroupLabel>
        </Group>
        <Group w={196}>
          <GroupBody>
            <Big w={67} icon={<Magnifier s={48} />} label="查找" />
            <Smalls ml={4}>
              <Small><Magnifier s={24} />查找下一个</Small>
              <Small><Replace />替换</Small>
              <Small><Advanced />高级</Small>
            </Smalls>
          </GroupBody>
          <GroupLabel>查找并替换</GroupLabel>
        </Group>
        <Group w={245}>
          <GroupBody>
            <Big w={128} icon={<Lock />} label="锁定/解锁句段" />
            <Big w={109} icon={<ChangeState />} label="更改句段状态" />
          </GroupBody>
          <GroupLabel>句段状态</GroupLabel>
        </Group>
        <Group w={657}>
          <GroupBody>
            <Big w={88} icon={<Thumbs />} label="质量保证" caret />
            <Big w={89} icon={<Conflict />} label="更改和冲突" caret />
            <Big w={157} icon={<Regex />} label="正则表达式标注器" />
            <Big w={74} icon={<Extract />} label="提取术语" />
            <Big w={105} icon={<Confirm />} label="确认并更新" />
            <Big w={56} icon={<Acronym />} label={"查找\n缩写"} />
            <Big w={85} icon={<ClearNote />} label="清除注释" />
          </GroupBody>
          <GroupLabel>其它</GroupLabel>
        </Group>
      </Ribbon>
      <DocTabs>
        <HomeTab>
          <HomeName>项目主页</HomeName>
          <Ico s={22}><circle cx="11" cy="11" r="10.500" fill="url(#greyOrb)" stroke="#8f8f8f" /><path d="m7.500 7.500 7 7M14.500 7.500l-7 7" stroke="#f4f4f4" strokeWidth="2.200" /></Ico>
        </HomeTab>
        <DocTab><Txt size={19} w={400} ls={-0.35} color="#808080">0407SE操作手册 (bookmap)_501072100001.xml (eng-US)</Txt></DocTab>
        <TabSep />
        <ActiveDoc>
          <Txt size={19} w={400} ls={-0.42}>source file in game localization.xlsx (eng)</Txt>
          <Ico s={11}><path d="m1.500 1.500 8 8M9.500 1.500l-8 8" stroke="#2a4ba5" strokeWidth="2.400" /></Ico>
        </ActiveDoc>
        <Ico s={10} h={29}><path d="M0 0h2l6 28H0z" fill={lav} /><path d="m1.500 1 6 26" stroke="#8c8c8c" strokeWidth="2.200" /></Ico>
        <DocMenu><Ico s={22}><circle cx="11" cy="11" r="10.800" fill="url(#orb)" /><path d="M6 7.500h10l-5 8z" stroke="#dbe8fb" strokeWidth="1.600" fill="#2b56ad" /></Ico></DocMenu>
      </DocTabs>
      <Work>
        <Left>
          <Editor>
            <Filter>
              <FLabel w={53}>原文</FLabel>
              <Field mr={13}><Rx>Rx</Rx></Field>
              <FLabel w={53}>译文</FLabel>
              <Field mr={14}><Rx>Rx</Rx></Field>
              <Tools>
                <Ico s={38}>
                  <path d="M1.500 15a12 12.500 0 1 1 24 1 12 12 0 0 1-4 8" stroke="#b0b0b0" strokeWidth="4" /><path d="m23.500 25 12.500 11" stroke="#b0b0b0" strokeWidth="5" />
                  <path d="M0 19h21v4L14 33v3l-7 2v-5L0 23z" fill="#8a8a8a" /><path d="M0 19h21v4H0z" fill="#a8a8a8" /><path d="M7 33h7v3l-7 2z" fill="#b5b5b5" />
                </Ico>
                <Ico s={38}><path d={gear(19, 19, 20, 15.5, 8)} fill="#27407f" /><circle cx="19" cy="19" r="6.200" fill="#f0f0f0" /></Ico>
                <Ico s={38}>
                  <path d="M0 11h28v8L18.500 31v4L9.500 38v-7L0 19z" fill="#7fcbab" /><path d="M0 19h28L18.500 31h-9z" fill="#56a583" />
                  <path d="M28 0v20M18 10h20" stroke="#efefef" strokeWidth="8" /><path d="M28 0v20M18 10h20" stroke="#f15a2b" strokeWidth="6" />
                </Ico>
                <Ico s={38}>
                  <circle cx="14.500" cy="14" r="12" fill="#8f8f8f" stroke="#a9a9a9" strokeWidth="4.500" /><path d="m23.500 24 13 12.500" stroke="#a9a9a9" strokeWidth="5.500" />
                  <path d="m10.500 10 8 8.500M18.500 10l-8 8.500" stroke="#fff" strokeWidth="3" />
                </Ico>
              </Tools>
              <FLabel w={53}>排序</FLabel>
              <Select><span>无排序</span><Chev s={13} sw={1.5} /></Select>
            </Filter>
            <GridArea>
              <Rows>
                <Seg n="9." h={44} pull={-21} first>
                  <Line>武将处于<Pill w={61} l={4}>[text]</Pill>状态，未能成功释放技能<Pill w={147} l={6}>{"<color=#ffd76b>"}</Pill><Pill w={112} l={9}>[behaviorID]</Pill></Line>
                  <Line><Pill w={89} l={2}>{"</color>"}</Pill></Line>
                </Seg>
                <Seg n="10." h={41}><Line>指令<Latin ls={0.15}>id:%s</Latin><Pill w={39} l={4}>\n</Pill></Line></Seg>
                <Seg n="11." h={41}><Line><Latin ls={-0.1}>$var$var(</Latin>盟主<Latin>)</Latin></Line></Seg>
                <Seg n="12." h={65} active>
                  <Line>因为一次小小的意外误打<Pill w={38} l={3}>\n</Pill><CaretBar />误撞进另一个“世界”的她，第<Pill w={39} l={4} r={2}>\n</Pill>一次</Line>
                  <Line>知晓了这个世界的真相。</Line>
                </Seg>
                <Seg n="13." h={41}><Line>领主大人，神域之路到达<Latin>@@</Latin>层了呀<Latin ls={1}>~</Latin></Line></Seg>
                <Seg n="14." h={41}><Line>开服<Latin>$</Latin><Pill w={71} l={2} r={1}>{"{num}"}</Pill>天并且达到<Latin>$</Latin><Pill w={72} l={2} r={1}>{"{level}"}</Pill>级开启</Line></Seg>
              </Rows>
              <Scroll w={25}>
                <ArrowBox mt={8}><Chev up s={13} sw={3} /></ArrowBox>
                <Thumb mt={153} h={70} />
                <ArrowBox mt={7}><Chev s={13} sw={3} /></ArrowBox>
              </Scroll>
              <Annotations width="1520" height="272" viewBox="3 298 1520 272" fill="none" stroke="#1da91d" strokeWidth="4">
                <ellipse cx="183" cy="354.800" rx="38.500" ry="24.500" />
                <ellipse cx="320" cy="439" rx="40.500" ry="23.500" />
                <ellipse cx="644" cy="435.500" rx="48" ry="34" />
              </Annotations>
            </GridArea>
            <Info>
              <InfoItem bold mr={9}>已更改</InfoItem>
              <InfoItem mr={11} ls={-0.5}>ThinkPad 2022/7/14 12:30</InfoItem>
              <InfoItem bold mr={25}>上下文</InfoItem>
              <InfoItem ls={-0.5}>item_name_12</InfoItem>
            </Info>
          </Editor>
          <View>
            <ViewHead>
              <Grip />
              <PaneName>视图面板</PaneName>
              <PaneButtons>
                <Ico s={9}><path d="M1 1.500h7v6H1z" stroke="#1b4799" strokeWidth="1.300" /></Ico>
                <Ico s={8} h={11}><path d="M2.500 6V1h3.500v5M.5 6.500h7M4 7v4" stroke="#1b4799" strokeWidth="1.300" /></Ico>
                <Ico s={9}><path d="m1 1 7 7M8 1 1 8" stroke="#1b4799" strokeWidth="1.700" /></Ico>
              </PaneButtons>
            </ViewHead>
            <ViewBody>
              <Sheets>
                <Sheet cut>
                  <SheetRow tone="green" h={36}>
                    <Name />
                    <Value pull={-23}><VLine ls={0.45}>一个“世界”的她，第\n一次知晓了这</VLine><VLine>个世界的真相。</VLine></Value>
                  </SheetRow>
                  <SheetRow tone="peach" h={86}>
                    <Name bold>English - Sheet1!C (<Thin>翻译</Thin> - eng)</Name>
                    <Value>
                      <Hit w={382} kind="open">因为一次小小的意外误打\n误撞进另</Hit>
                      <Hit w={382} kind="mid">一个“世界”的她，第\n一次知晓了这</Hit>
                      <Hit w={168} kind="close">个世界的真相。</Hit>
                    </Value>
                  </SheetRow>
                  <SheetRow tone="grey" h={30}><Name>string ID - Sheet1!A (ID)</Name><Value latin>item_name_12</Value></SheetRow>
                </Sheet>
                <Sheet>
                  <SheetTitle>Sheet1!C14</SheetTitle>
                  <SheetRow tone="green" h={31}><Name bold>Chinese(PRC) - Sheet1!B (<Thin>原文</Thin>)</Name><Value>领主大人，神域之路到达<At>@@</At>层了呀~</Value></SheetRow>
                  <SheetRow tone="peach" h={30}><Name bold>English - Sheet1!C (<Thin>翻译</Thin> - eng)</Name><Value>领主大人，神域之路到达<At>@@</At>层了呀~</Value></SheetRow>
                  <SheetRow tone="grey" h={30}><Name>string ID - Sheet1!A (ID)</Name><Value latin>item_name_13</Value></SheetRow>
                </Sheet>
                <Sheet><SheetTitle>Sheet1!C15</SheetTitle></Sheet>
              </Sheets>
              <Scroll w={25}>
                <ArrowBox mt={12}><Chev up s={20} sw={3} /></ArrowBox>
                <Thumb mt={216} h={32} />
                <ArrowBox mt={21}><Chev s={20} sw={3} /></ArrowBox>
              </Scroll>
            </ViewBody>
          </View>
        </Left>
        <Results>
          <ResHead>
            <Ico s={37} h={24}>
              <path d="M1 12C6 3 12 1 18.500 1S31 4 36 11c-4 8-10 12-17.500 12S5 20 1 12z" fill="#fff" stroke="#98a4c4" strokeWidth="2" />
              <path d="M6 6C12 1 25 0 32 7" stroke="#7f92c8" strokeWidth="2.500" /><circle cx="17" cy="12.500" r="8.500" fill="url(#iris)" /><circle cx="19.500" cy="7.500" r="1.700" fill="#fff" />
            </Ico>
            翻译结果
          </ResHead>
          <ResList />
          <Segment h={87} mt={9}>
            <SLine>因为一次小小的意外误打<Hex />误撞进另一个“</SLine>
            <SLine>世界”的她，第<Hex l={5} />一次知晓了这个世界的真</SLine>
            <SLine>相。</SLine>
          </Segment>
          <Segment h={86} />
          <Segment h={87} />
          <Dark />
          <DarkFade />
        </Results>
      </Work>
      <Status>
        <Stat w={105} ls={0.3}>项目 (eng)：</Stat><Stat w={36}>0%</Stat><Stat w={55}>文档：</Stat><Stat w={34}>0%</Stat><StatSep mr={6} />
        <Stat w={63} ls={0.4}>TR: 0</Stat><Stat w={63} ls={0.3}>R1: 0</Stat><Stat w={63} ls={0.3}>R2: 0</Stat><Stat w={92}>已编辑: 0</Stat><Stat w={76}>拒绝: 0</Stat>
        <Stat w={70} ls={0.6}>空: 14</Stat><Stat w={94}>预翻译: 0</Stat><Stat w={77}>碎片: 0</Stat><Stat w={54} ls={0.3}>MT: 0</Stat><StatSep mr={5} />
        <Ico s={14} h={15}><circle cx="7" cy="7" r="5.800" stroke="#2a9a2a" strokeWidth="1.600" /><path d="m4 7 2.200 2.500L10 5" stroke="#2a9a2a" strokeWidth="1.600" /></Ico>
        <Stat w={91} ls={-0.2}>{" QA 错误："}</Stat><Stat w={19}>0</Stat><StatSep mr={6} />
        <Stat w={43}>插入</Stat><StatSep mr={5} />
        <Stat w={54}>位置：</Stat><Stat w={22}>8</Stat><Stat w={54}>长度：</Stat><Stat w={115} ls={1}>7 + 1 / 0 + 0</Stat><StatSep mr={0} />
        <StatOk><Ico s={18}><path d="M2 10c2 0 3 2 4 4L14 1h3L7 17H5z" fill="#19b81e" stroke="#0c5c12" strokeWidth=".7" /></Ico></StatOk>
      </Status>
    </Window>
  );
}
